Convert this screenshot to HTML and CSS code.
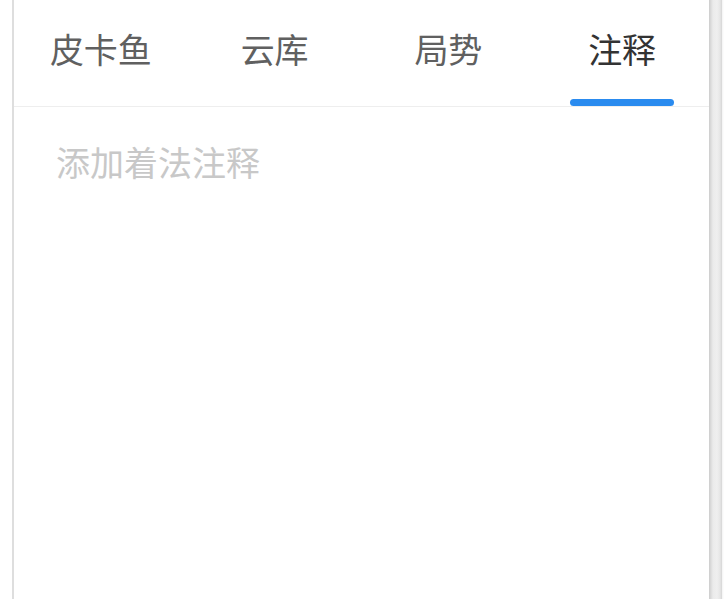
FILE: index.html
```html
<!DOCTYPE html>
<html lang="zh-CN">
<head>
<meta charset="utf-8">
<title>注释</title>
<link rel="stylesheet" href="styles.css">
</head>
<body>
<div class="page">
  <div class="gutter"></div>
  <div class="panel">
    <nav class="tabs">
      <div class="tab"><span class="label">皮卡鱼</span></div>
      <div class="tab"><span class="label">云库</span></div>
      <div class="tab"><span class="label">局势</span></div>
      <div class="tab active"><span class="label">注释</span><span class="indicator"></span></div>
    </nav>
    <div class="content">
      <div class="placeholder">添加着法注释</div>
    </div>
  </div>
  <div class="edge"></div>
</div>
</body>
</html>
```

FILE: styles.css
```css
html, body {
  margin: 0;
  padding: 0;
  background: #ffffff;
  height: 100%;
}
body {
  font-family: "Noto Sans CJK SC", "Noto Sans", sans-serif;
}
.page {
  display: flex;
  height: 599px;
  overflow: hidden;
}
.gutter {
  flex: 0 0 12px;
  background: #ffffff;
}
.panel {
  flex: 0 0 695px;
  border-left: 2px solid #dedede;
  background: #ffffff;
  display: flex;
  flex-direction: column;
}
.edge {
  flex: 0 0 15px;
  background: linear-gradient(to right, #cccccc 0px, #dcdcdc 2px, #ebebeb 4px, #efefef 8px, #e6e6e6 11px, #d6d6d6 13px, #f6f6f6 13.5px, #ffffff 15px);
}
.tabs {
  display: grid;
  grid-template-columns: repeat(4, 1fr);
  height: 106px;
  border-bottom: 1px solid #eeeeee;
}
.tab {
  display: flex;
  flex-direction: column;
  align-items: center;
  height: 106px;
}
.label {
  margin-top: 29px;
  font-size: 34px;
  line-height: 40px;
  color: #606060;
}
.tab.active .label {
  color: #333333;
}
.indicator {
  margin-top: auto;
  width: 104px;
  height: 7px;
  border-radius: 4px;
  background: #2a8bef;
}
.content {
  flex: 1;
  padding: 35px 0 0 42px;
}
.placeholder {
  font-size: 34px;
  line-height: 40px;
  color: #c8c8c8;
}
```
